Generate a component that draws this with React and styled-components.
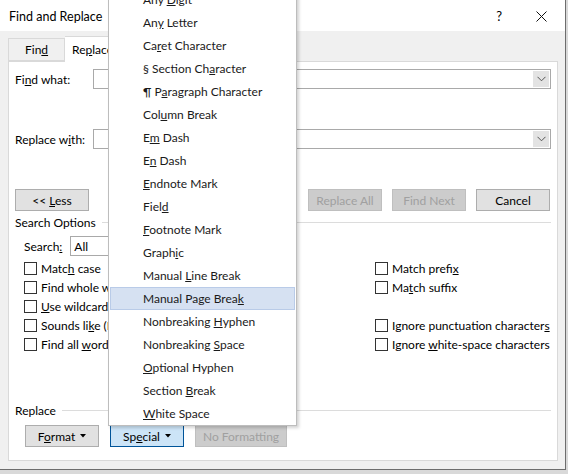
import styled, { createGlobalStyle } from "styled-components";

const FONT = `Lato, "Noto Sans", sans-serif`;

const GlobalStyle = createGlobalStyle`
    html, body {
        margin: 0;
        padding: 0;
        background: #d9d9d9;
        overflow: hidden;
    }
    body {
        font-family: ${FONT};
        font-size: 12px;
        color: #000;
    }
`;

const MENU_ITEMS = [
    ["Any ", "D", "igit"],
    ["An", "y", " Letter"],
    ["Ca", "r", "et Character"],
    ["§ Section Ch", "a", "racter"],
    ["¶ P", "a", "ragraph Character"],
    ["Col", "u", "mn Break"],
    ["E", "m", " Dash"],
    ["E", "n", " Dash"],
    ["", "E", "ndnote Mark"],
    ["Fiel", "d", ""],
    ["", "F", "ootnote Mark"],
    ["Graph", "i", "c"],
    ["Manual ", "L", "ine Break"],
    ["Manual Page Brea", "k", ""],
    ["Nonbreaking ", "H", "yphen"],
    ["Nonbreaking ", "S", "pace"],
    ["", "O", "ptional Hyphen"],
    ["Section ", "B", "reak"],
    ["", "W", "hite Space"],
];

const LEFT_OPTIONS = [
    ["Matc", "h", " case"],
    ["Find whole words onl", "y", ""],
    ["", "U", "se wildcards"],
    ["Sounds li", "k", "e (English)"],
    ["Find all ", "w", "ord forms (English)"],
];

const RIGHT_OPTIONS = [
    ["Match prefi", "x", ""],
    ["Ma", "t", "ch suffix"],
    null,
    ["Ignore punctuation character", "s", ""],
    ["Ignore ", "w", "hite-space characters"],
];

// label text with its access key underlined, kept in one inline run
const Key = ({ parts }) => (
    <span>
        {parts[0]}
        <u>{parts[1]}</u>
        {parts[2]}
    </span>
);

const Chevron = () => (
    <svg width="9" height="6" viewBox="0 0 9 6">
        <path d="M0.5 0.8 L4.5 4.8 L8.5 0.8" fill="none" stroke="#555" strokeWidth="1" />
    </svg>
);

const Caret = () => (
    <svg width="6" height="4" viewBox="0 0 6 4">
        <path d="M0 0 H6 L3 3.5 Z" fill="#000" />
    </svg>
);

const Combo = () => (
    <ComboBox>
        <ComboArrow>
            <Chevron />
        </ComboArrow>
    </ComboBox>
);

const Option = ({ parts }) => (
    <OptionRow>
        <CheckBox />
        <Key parts={parts} />
    </OptionRow>
);

export default function App() {
    return (
        <>
            <GlobalStyle />
            <Window>
                <TitleBar>
                    <Title>Find and Replace</Title>
                    <TitleButtons>
                        <HelpMark>?</HelpMark>
                        <svg width="11" height="11" viewBox="0 0 11 11">
                            <path d="M0.5 0.5 L10.5 10.5 M10.5 0.5 L0.5 10.5" stroke="#111" strokeWidth="1" />
                        </svg>
                    </TitleButtons>
                </TitleBar>
                <Body>
                    <TabStrip>
                        <Tab>
                            <Key parts={["Fin", "d", ""]} />
                        </Tab>
                        <Tab active>
                            <Key parts={["Re", "p", "lace"]} />
                        </Tab>
                    </TabStrip>
                    <Panel>
                        <FieldRow>
                            <FieldLabel>
                                <Key parts={["Fi", "n", "d what:"]} />
                            </FieldLabel>
                            <Combo />
                        </FieldRow>
                        <FieldRow gap="40px">
                            <FieldLabel>
                                <Key parts={["Replace w", "i", "th:"]} />
                            </FieldLabel>
                            <Combo />
                        </FieldRow>
                        <ButtonRow>
                            <Button>
                                <Key parts={["<< ", "L", "ess"]} />
                            </Button>
                            <ButtonGroup>
                                <Button disabled>Replace All</Button>
                                <Button disabled>Find Next</Button>
                                <Button>Cancel</Button>
                            </ButtonGroup>
                        </ButtonRow>
                        <GroupHeader>Search Options</GroupHeader>
                        <SearchRow>
                            <Key parts={["Search", ":", ""]} />
                            <SelectBox>All</SelectBox>
                        </SearchRow>
                        <OptionsGrid>
                            <OptionColumn>
                                {LEFT_OPTIONS.map((o, i) => (
                                    <Option key={i} parts={o} />
                                ))}
                            </OptionColumn>
                            <OptionColumn>
                                {RIGHT_OPTIONS.map((o, i) =>
                                    o ? <Option key={i} parts={o} /> : <OptionRow key={i} />
                                )}
                            </OptionColumn>
                        </OptionsGrid>
                        <BottomSection>
                            <GroupHeader>Replace</GroupHeader>
                            <BottomButtons>
                                <Button>
                                    <Key parts={["F", "o", "rmat"]} />
                                    <Caret />
                                </Button>
                                <Button pressed>
                                    <Key parts={["Sp", "e", "cial"]} />
                                    <Caret />
                                </Button>
                                <Button disabled wide>
                                    No Formatting
                                </Button>
                            </BottomButtons>
                        </BottomSection>
                    </Panel>
                </Body>
                <Menu>
                    {MENU_ITEMS.map((m, i) => (
                        <MenuItem key={i} active={i === 13}>
                            <Key parts={m} />
                        </MenuItem>
                    ))}
                </Menu>
            </Window>
        </>
    );
}

const Window = styled.div`
    position: relative;
    width: 565px;
    height: 469px;
    background: #f0f0f0;
    border-right: 1px solid #6d6d6d;
    border-bottom: 1px solid #6d6d6d;
    display: flex;
    flex-direction: column;
    line-height: 15px;
    white-space: pre;
`;

const TitleBar = styled.div`
    height: 31px;
    flex-shrink: 0;
    background: #fff;
    display: flex;
    align-items: center;
    justify-content: space-between;
    padding: 1px 18px 0 9px;
    box-sizing: border-box;
`;

const Title = styled.div`
    font-size: 12.5px;
`;

const TitleButtons = styled.div`
    display: flex;
    align-items: center;
    gap: 34px;
`;

const HelpMark = styled.span`
    font-size: 13px;
`;

const Body = styled.div`
    flex: 1;
    display: flex;
    flex-direction: column;
    padding: 6px 7px 8px 8px;
`;

const TabStrip = styled.div`
    display: flex;
    align-items: flex-end;
    height: 24px;
`;

const Tab = styled.div`
    position: relative;
    display: flex;
    align-items: center;
    justify-content: center;
    height: ${(p) => (p.active ? "25px" : "21px")};
    margin-bottom: ${(p) => (p.active ? "-1px" : "0")};
    padding: 0 ${(p) => (p.active ? "7px" : "16px")};
    background: ${(p) => (p.active ? "#fff" : "#f0f0f0")};
    border: 1px solid #d9d9d9;
    border-bottom: ${(p) => (p.active ? "none" : "1px solid #d9d9d9")};
    border-left: ${(p) => (p.active ? "none" : "1px solid #d9d9d9")};
    z-index: ${(p) => (p.active ? 1 : 0)};
`;

const Panel = styled.div`
    flex: 1;
    display: flex;
    flex-direction: column;
    background: #fff;
    border: 1px solid #d9d9d9;
    padding: 7px 6px 13px 6px;
`;

const FieldRow = styled.div`
    display: flex;
    align-items: center;
    height: 20px;
    margin-top: ${(p) => p.gap || "0"};
`;

const FieldLabel = styled.div`
    width: 78px;
    flex-shrink: 0;
`;

const ComboBox = styled.div`
    flex: 1;
    height: 20px;
    box-sizing: border-box;
    border: 1px solid #a9a9a9;
    background: #fff;
    display: flex;
    justify-content: flex-end;
    padding: 1px;
`;

const ComboArrow = styled.div`
    width: 16px;
    background: #e3e3e3;
    display: flex;
    align-items: center;
    justify-content: center;
`;

const ButtonRow = styled.div`
    display: flex;
    justify-content: space-between;
    margin-top: 40px;
    padding-right: 1px;
`;

const ButtonGroup = styled.div`
    display: flex;
    gap: 10px;
`;

const Button = styled.div`
    box-sizing: border-box;
    width: ${(p) => (p.wide ? "92px" : "74px")};
    height: 22px;
    display: flex;
    align-items: center;
    justify-content: center;
    gap: 5px;
    background: ${(p) => (p.disabled ? "#cccccc" : p.pressed ? "#cce4f7" : "#e1e1e1")};
    border: 1px solid ${(p) => (p.disabled ? "#bfbfbf" : p.pressed ? "#005499" : "#adadad")};
    color: ${(p) => (p.disabled ? "#a0a0a0" : "#000")};
`;

const GroupHeader = styled.div`
    display: flex;
    align-items: center;
    gap: 6px;
    margin-top: 4px;
    height: 15px;

    &::after {
        content: "";
        flex: 1;
        height: 1px;
        background: #dcdcdc;
    }
`;

const SearchRow = styled.div`
    display: flex;
    align-items: center;
    gap: 8px;
    margin: 6px 0 0 9px;
    height: 20px;
`;

const SelectBox = styled.div`
    width: 150px;
    height: 20px;
    box-sizing: border-box;
    border: 1px solid #a9a9a9;
    padding-left: 3px;
    display: flex;
    align-items: center;
`;

const OptionsGrid = styled.div`
    display: grid;
    grid-template-columns: 351px 1fr;
    margin: 3px 0 0 9px;
`;

const OptionColumn = styled.div`
    display: flex;
    flex-direction: column;
`;

const OptionRow = styled.div`
    display: flex;
    align-items: center;
    gap: 4px;
    height: 19px;
`;

const CheckBox = styled.div`
    width: 13px;
    height: 13px;
    box-sizing: border-box;
    border: 1px solid #333;
    background: #fff;
    flex-shrink: 0;
`;

const BottomSection = styled.div`
    margin-top: auto;
`;

const BottomButtons = styled.div`
    display: flex;
    gap: 11px;
    margin: 7px 0 0 10px;
`;

const Menu = styled.div`
    position: absolute;
    left: 108px;
    top: -13px;
    width: 189px;
    box-sizing: border-box;
    background: #fff;
    border: 1px solid #bdbdbd;
    box-shadow: 2px 2px 3px rgba(0, 0, 0, 0.18);
    z-index: 5;
    color: #1a1a1a;
`;

const MenuItem = styled.div`
    height: 23px;
    box-sizing: border-box;
    margin: 0 1px;
    padding-left: 32px;
    display: flex;
    align-items: center;
    border: 1px solid ${(p) => (p.active ? "#b9cbe8" : "transparent")};
    background: ${(p) => (p.active ? "#d6e1f2" : "transparent")};
`;
